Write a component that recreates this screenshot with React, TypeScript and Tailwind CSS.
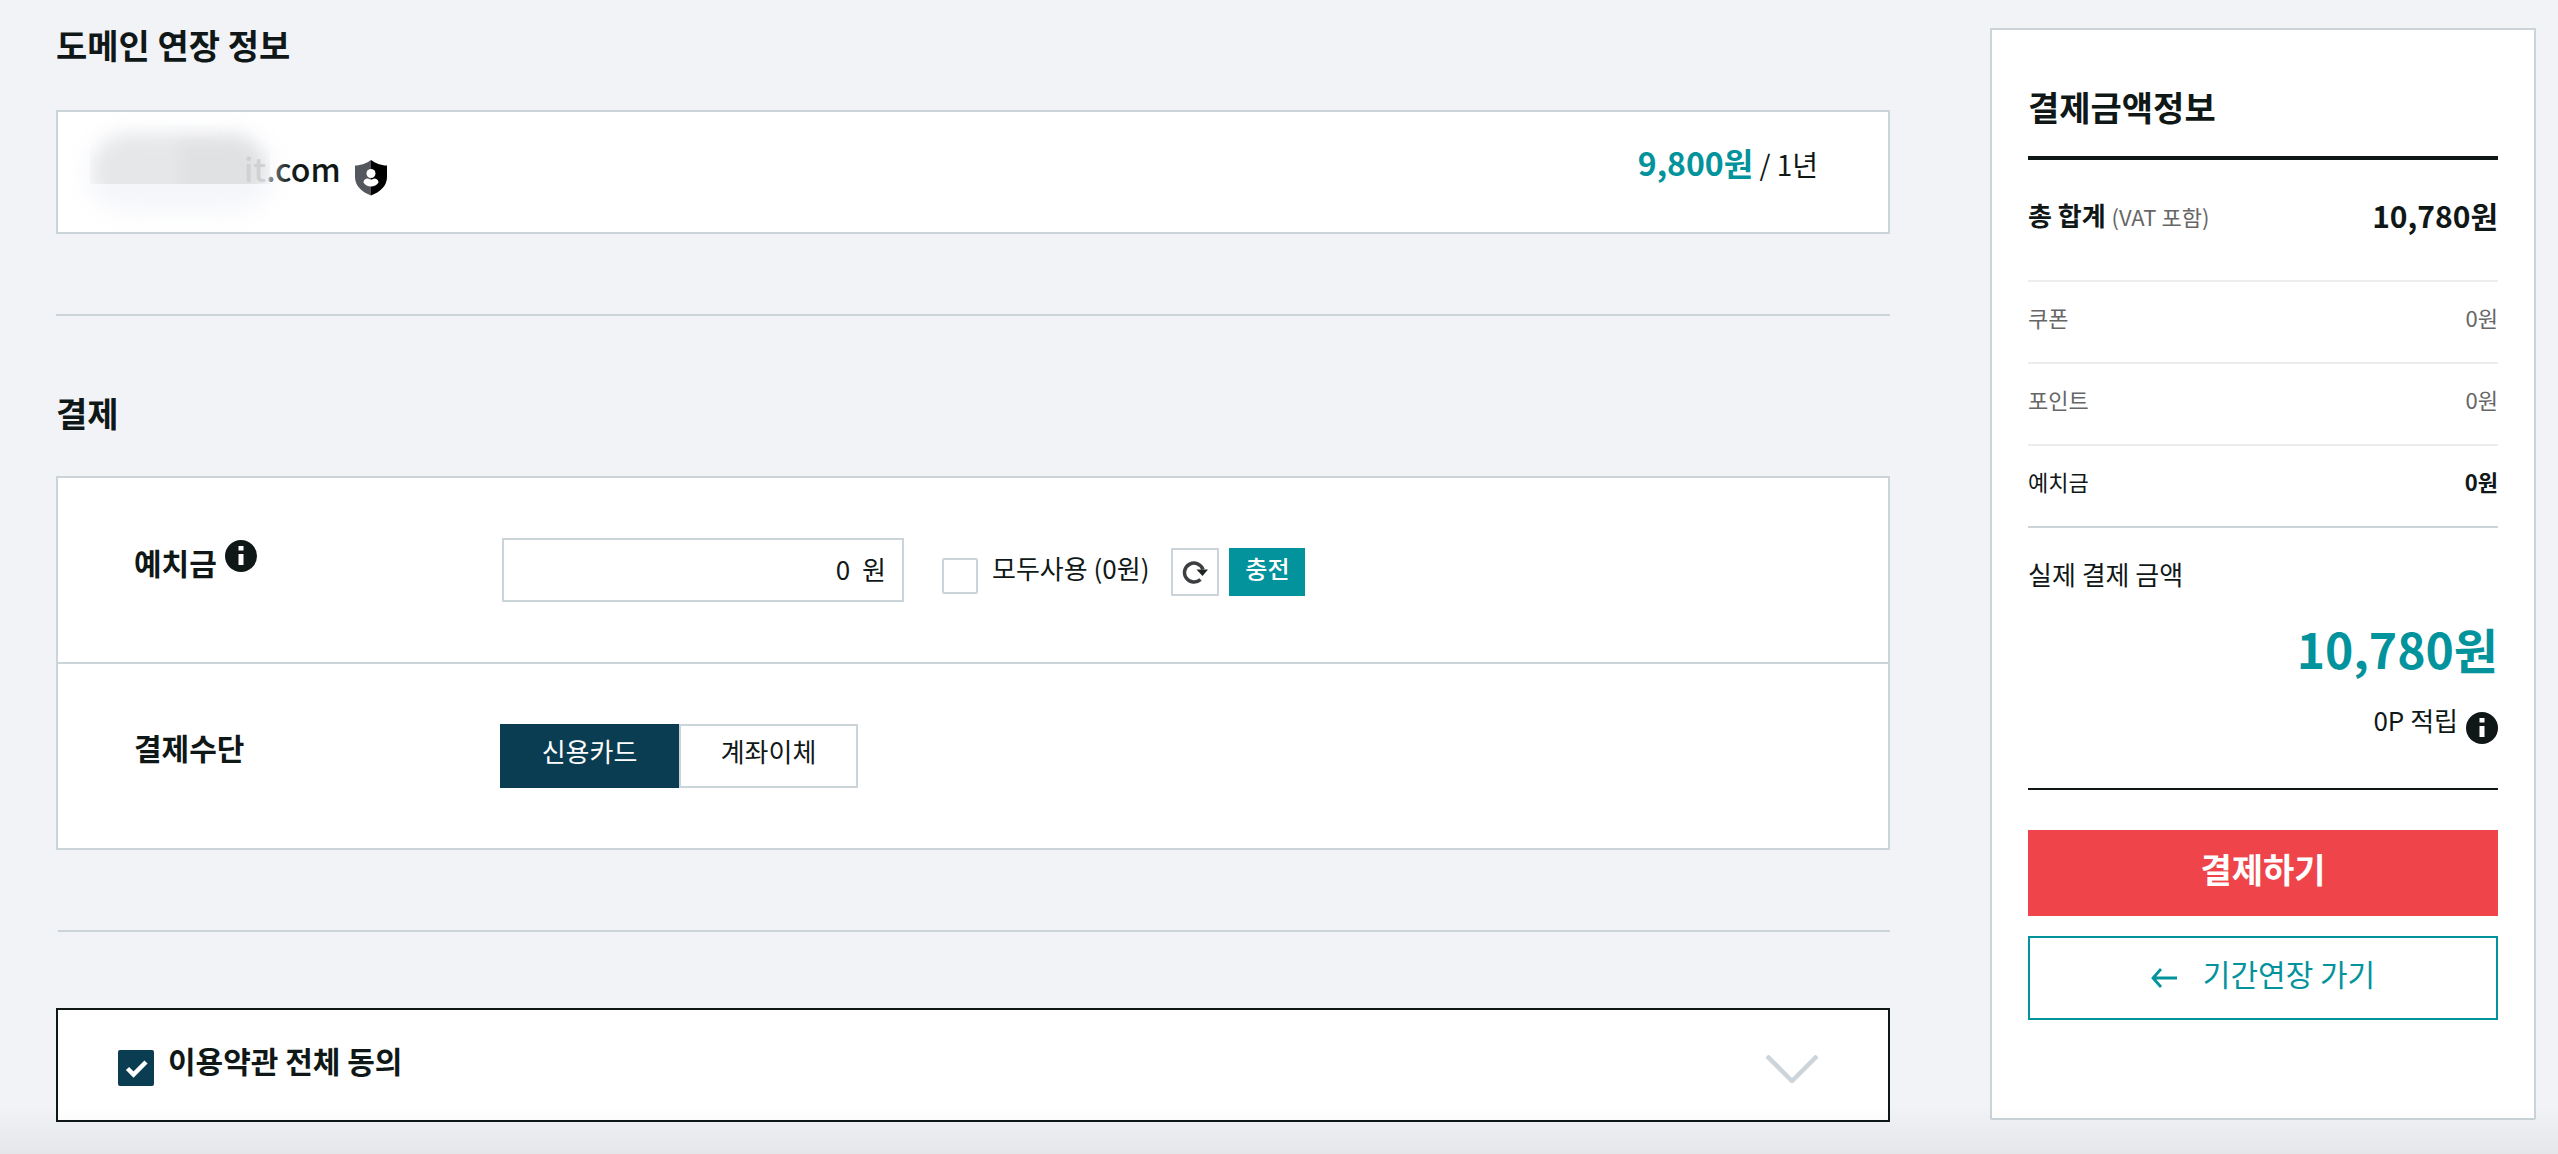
import { useState } from 'react';

function InfoIcon() {
  return (
    <svg viewBox="0 0 32 32" className="block size-8" aria-hidden="true">
      <circle cx="16" cy="16" r="16" fill="#101817" />
      <rect x="13.5" y="6" width="5" height="4.5" fill="#fff" />
      <rect x="13.5" y="14" width="5" height="11" fill="#fff" />
    </svg>
  );
}

function ShieldIcon() {
  return (
    <svg viewBox="0 0 32 38" className="mt-[14px] block h-[38px] w-8 shrink-0" aria-hidden="true">
      <path d="M16 2C12 5 6 7.500 0 7.500V19c0 9 7 15 16 18.500z" fill="#54585e" />
      <path d="M16 2c4 3 10 5.500 16 5.500V19c0 9-7 15-16 18.500z" fill="#000" />
      <circle cx="16" cy="15.500" r="4.500" fill="#fff" />
      <path d="M8.500 24.500c0-2.500 2-4 4.500-4 1 .8 2 1 3 1s2-.2 3-1c2.500 0 4.500 1.500 4.500 4-1.500 2.500-4.500 4-7.500 4s-6-1.500-7.500-4z" fill="#fff" />
    </svg>
  );
}

function RefreshIcon() {
  return (
    <svg viewBox="0 0 28 24" className="block h-6 w-7" fill="none" aria-hidden="true">
      <path d="M19.500 19.500A9.500 9.500 0 1 1 22 9.500" stroke="#3c3f41" strokeWidth="3.500" />
      <path d="M15.500 9.500H27L21.500 16z" fill="#222526" />
    </svg>
  );
}

function SectionTitle({ children }: { children: string }) {
  return <h2 className="text-[34px] leading-[34px] font-bold">{children}</h2>;
}

function PriceRow({ label, value, strong }: { label: string; value: string; strong?: boolean }) {
  return (
    <div
      className={
        strong
          ? 'flex h-[82px] items-center justify-between border-b-2 border-[#cbd4d9] pb-[10px] text-[22px] leading-8'
          : 'flex h-[82px] items-center justify-between border-b-2 border-[#ebedee] pb-[10px] text-[22px] leading-8 text-[#666]'
      }
    >
      <dt>{label}</dt>
      <dd className={strong ? 'font-bold' : ''}>{value}</dd>
    </div>
  );
}

const methods = ['신용카드', '계좌이체'];

export default function App() {
  const [method, setMethod] = useState('신용카드');
  const [useAll, setUseAll] = useState(false);
  const [agreed, setAgreed] = useState(true);
  const [deposit, setDeposit] = useState('0');

  return (
    <div className="flex min-h-screen items-start gap-[100px] bg-[#f2f3f7] pt-7 pr-[22px] pb-7 pl-14 font-['Noto_Sans_CJK_KR',sans-serif] text-[#101817]">
      <main className="min-w-0 flex-1">
        <section>
          <SectionTitle>도메인 연장 정보</SectionTitle>
          <div className="mt-12 flex h-[124px] items-start justify-between border-2 border-[#cbd4d9] bg-white pt-8 pr-[70px] pl-9">
            <div className="flex gap-[14px]">
              <p className="mt-1 flex text-[32px] leading-10 font-medium">
                <span className="relative flex w-[172px] justify-end text-[#cfd1d2]">
                  <span className="absolute -inset-x-2 -top-4 h-20 rounded-[40px] bg-[#f5f6fa] blur-md" />
                  <span className="absolute -inset-x-1 -top-6 h-[60px] overflow-hidden">
                    <span className="absolute inset-x-1 top-3 h-18 rounded-[36px] bg-linear-to-r from-[#e6e7e8] from-50% to-[#e0e1e3] to-50% blur-sm" />
                  </span>
                  <span className="relative">it</span>
                </span>
                .com
              </p>
              <ShieldIcon />
            </div>
            <p className="text-[28px] leading-9">
              <strong className="text-[32px] font-bold text-[#03939c]">9,800원</strong> / 1년
            </p>
          </div>
        </section>

        <hr className="my-20 border-t-2 border-[#cbd4d9]" />

        <section>
          <SectionTitle>결제</SectionTitle>
          <div className="mt-[46px] divide-y-2 divide-[#cbd4d9] border-2 border-[#cbd4d9] bg-white">
            <div className="flex h-[186px] items-center pl-[76px]">
              <div className="flex w-[368px] gap-2 pb-6">
                <label htmlFor="deposit" className="pt-2 text-[30px] leading-9 font-bold">
                  예치금
                </label>
                <button type="button" aria-label="예치금 안내" className="mt-1 self-start">
                  <InfoIcon />
                </button>
              </div>
              <div className="flex h-16 w-[402px] items-center border-2 border-[#cbd4d9] pr-4 pb-[2px] text-[26px] leading-9">
                <input
                  id="deposit"
                  value={deposit}
                  onChange={(e) => setDeposit(e.target.value)}
                  className="min-w-0 flex-1 bg-transparent text-right outline-none"
                />
                <span className="pl-3">원</span>
              </div>
              <input
                id="use-all"
                type="checkbox"
                checked={useAll}
                onChange={(e) => setUseAll(e.target.checked)}
                className="mt-3 ml-[38px] size-9 appearance-none rounded-xs border-2 border-[#cbd4d9] bg-white checked:bg-[#0b3d52]"
              />
              <label htmlFor="use-all" className="ml-[14px] pb-1 text-[26px] leading-9">
                모두사용 (0원)
              </label>
              <button
                type="button"
                aria-label="새로고침"
                className="mt-1 ml-[22px] grid size-12 place-items-center border-2 border-[#cbd4d9] bg-white"
              >
                <RefreshIcon />
              </button>
              <button type="button" className="mt-1 ml-[10px] h-12 w-[76px] bg-[#03939c] pb-2 text-2xl leading-8 font-medium text-white">
                충전
              </button>
            </div>
            <div className="flex h-[184px] items-center pl-[76px]">
              <h3 className="w-[366px] pb-[18px] text-[30px] leading-9 font-bold">결제수단</h3>
              <div className="flex">
                {methods.map((m) => (
                  <button
                    key={m}
                    type="button"
                    aria-pressed={method === m}
                    onClick={() => setMethod(m)}
                    className={
                      method === m
                        ? 'h-16 w-[179px] border-2 border-[#0b3d52] bg-[#0b3d52] pb-[10px] text-[26px] leading-9 text-white'
                        : 'h-16 w-[179px] border-2 border-[#cbd4d9] bg-white pb-[10px] text-[26px] leading-9'
                    }
                  >
                    {m}
                  </button>
                ))}
              </div>
            </div>
          </div>
        </section>

        <hr className="mt-20 ml-[2px] border-t-2 border-[#cbd4d9]" />

        <section className="mt-[76px] flex h-[114px] items-center border-2 border-[#101817] bg-white pr-[70px] pl-[60px]">
          <span className="relative mt-[6px] block size-9">
            <input
              id="agree-all"
              type="checkbox"
              checked={agreed}
              onChange={(e) => setAgreed(e.target.checked)}
              className="block size-9 appearance-none rounded-xs border-2 border-[#cbd4d9] bg-white checked:border-[#0b3d52] checked:bg-[#0b3d52]"
            />
            {agreed && (
              <svg viewBox="0 0 36 36" fill="none" className="pointer-events-none absolute inset-0" aria-hidden="true">
                <path d="M9.500 18.500l6 6L28 12" stroke="#fff" strokeWidth="4.500" />
              </svg>
            )}
          </span>
          <label htmlFor="agree-all" className="ml-[14px] flex-1 pb-[10px] text-[30px] leading-9 font-bold">
            이용약관 전체 동의
          </label>
          <button type="button" aria-label="약관 펼치기" className="mt-2">
            <svg viewBox="0 0 52 28" fill="none" className="block h-7 w-[52px]" aria-hidden="true">
              <path d="M1 1l25 25L51 1" stroke="#cdd5da" strokeWidth="4.500" />
            </svg>
          </button>
        </section>
      </main>

      <aside className="w-[546px] shrink-0 rounded-b-xs border-2 border-[#cbd4d9] bg-white px-9 pt-[60px] pb-[98px]">
        <div className="border-b-4 border-[#101817] pb-8">
          <SectionTitle>결제금액정보</SectionTitle>
        </div>
        <dl>
          <div className="flex h-[122px] items-center justify-between border-b-2 border-[#ebedee] pb-[10px] leading-9">
            <dt className="text-[26px] font-bold">
              총 합계 <span className="text-[22px] font-normal text-[#666]">(VAT 포함)</span>
            </dt>
            <dd className="text-[30px] font-bold">10,780원</dd>
          </div>
          <PriceRow label="쿠폰" value="0원" />
          <PriceRow label="포인트" value="0원" />
          <PriceRow label="예치금" value="0원" strong />
          <div className="border-b-2 border-[#101817] pt-7 pb-11">
            <dt className="text-[26px] leading-9">실제 결제 금액</dt>
            <dd className="mt-[26px] text-right text-5xl leading-[60px] font-bold text-[#03939c]">10,780원</dd>
            <dd className="mt-6 flex h-[42px] justify-end gap-2 text-[26px] leading-9">
              <span>0P 적립</span>
              <button type="button" aria-label="적립 안내" className="self-end">
                <InfoIcon />
              </button>
            </dd>
          </div>
        </dl>
        <button type="button" className="mt-10 block h-[86px] w-full bg-[#ef454a] pb-2 text-[34px] leading-10 font-bold text-white">
          결제하기
        </button>
        <a
          href="#extend"
          className="mt-5 flex h-[84px] items-center justify-center gap-[26px] border-2 border-[#03939c] text-[30px] leading-10 text-[#03939c]"
        >
          <svg viewBox="0 0 26 20" fill="none" className="h-5 w-[26px]" aria-hidden="true">
            <path d="M26 10H2M10 1L2 10l8 9" stroke="#03939c" strokeWidth="2.800" />
          </svg>
          <span className="pb-[10px]">기간연장 가기</span>
        </a>
      </aside>

      <div className="pointer-events-none fixed inset-x-0 bottom-0 h-12 bg-linear-to-b from-transparent to-black/5" />
    </div>
  );
}
